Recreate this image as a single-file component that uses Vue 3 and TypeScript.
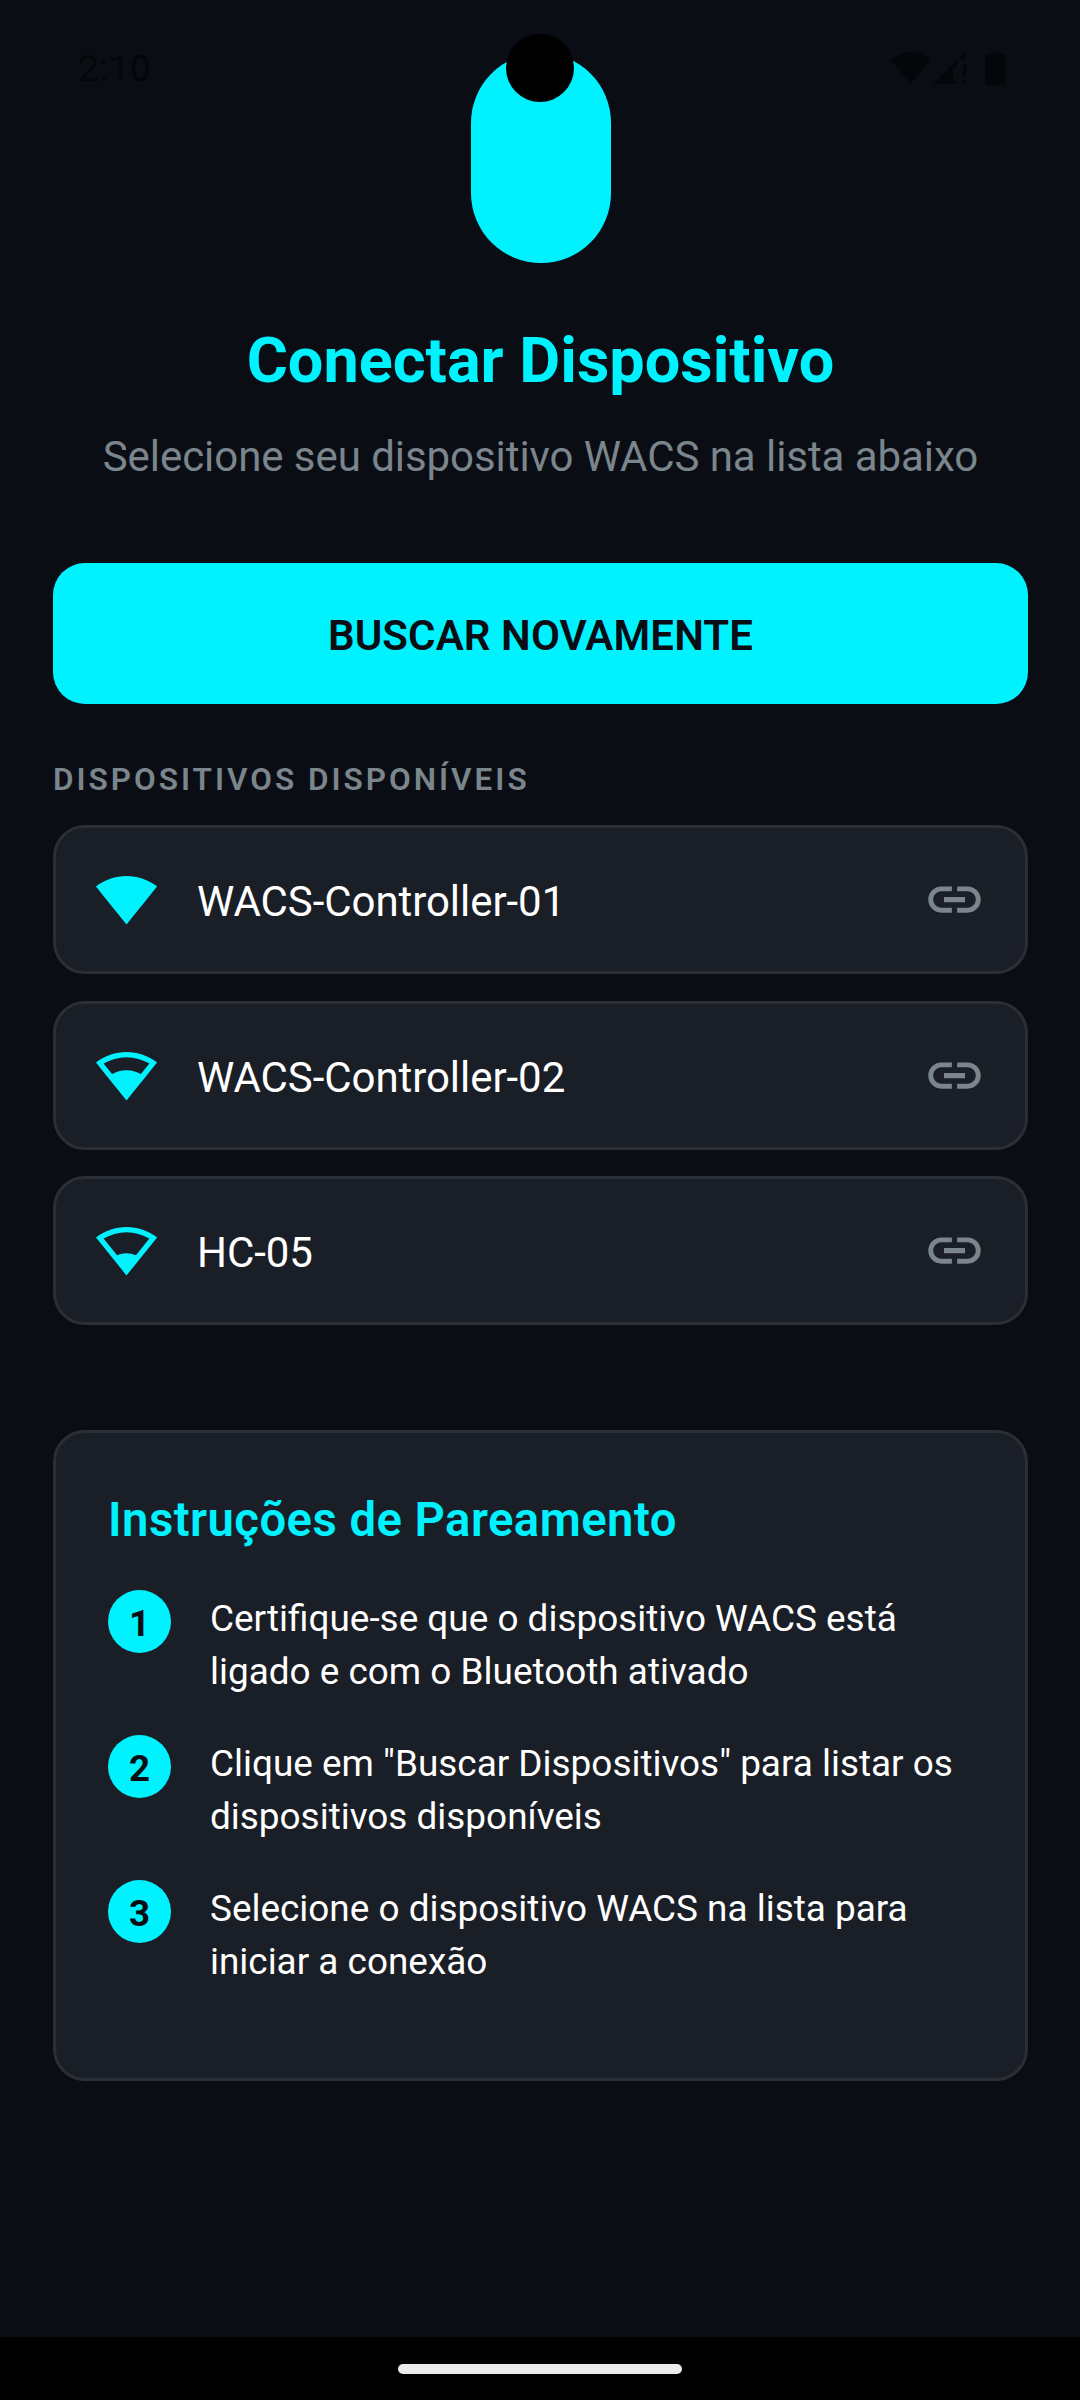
<script setup lang="ts">
interface Device {
  name: string
  signal: string
}

const fan =
  'M12,3C7.79,3 3.7,4.41 0.38,7C4.41,12.06 7.89,16.37 12,21.5C16.08,16.42 20.24,11.24 23.65,7C20.32,4.41 16.22,3 12,3'

const devices: Device[] = [
  { name: 'WACS-Controller-01', signal: fan + 'Z' },
  {
    name: 'WACS-Controller-02',
    signal:
      fan +
      'M12,5C15.07,5 18.09,5.86 20.71,7.45L17.5,11.43C16.26,10.74 14.37,10 12,10C9.62,10 7.74,10.75 6.5,11.43L3.27,7.44C5.91,5.85 8.93,5 12,5Z',
  },
  {
    name: 'HC-05',
    signal:
      fan +
      'M12,5C15.07,5 18.09,5.86 20.71,7.45L15.61,13.81C14.5,13.28 13.25,13 12,13C10.75,13 9.5,13.28 8.39,13.8L3.27,7.44C5.91,5.85 8.93,5 12,5Z',
  },
]

const steps: string[][] = [
  ['Certifique-se que o dispositivo WACS está', 'ligado e com o Bluetooth ativado'],
  ['Clique em "Buscar Dispositivos" para listar os', 'dispositivos disponíveis'],
  ['Selecione o dispositivo WACS na lista para', 'iniciar a conexão'],
]
</script>

<template>
  <div class="screen">
    <div class="status">
      <span class="clock">2:10</span>
      <svg class="status-icons" width="116" height="36" viewBox="0 0 116 36" fill="#050609">
        <path d="M0,9.500C11,-2 28,-2 39,9.500L19.500,32.500Z" />
        <path d="M75,0V8H67L75,0ZM42,33L66,9V14L62,18V30H66V33Z" />
        <path d="M72,13H75V26H72ZM72,29.500H75V33H72Z" />
        <path d="M100,0H108V3H112Q114,3 114,5V32Q114,34 112,34H96Q94,34 94,32V5Q94,3 96,3H100Z" />
      </svg>
    </div>
    <div class="camera"></div>

    <main class="content">
      <div class="logo"></div>
      <h1 class="title">Conectar Dispositivo</h1>
      <p class="subtitle">Selecione seu dispositivo WACS na lista abaixo</p>
      <button class="search">BUSCAR NOVAMENTE</button>
      <h2 class="label">DISPOSITIVOS DISPONÍVEIS</h2>

      <ul class="devices">
        <li v-for="device in devices" :key="device.name" class="device">
          <svg class="signal" viewBox="0 0 24 24"><path fill-rule="evenodd" :d="device.signal" /></svg>
          <span class="name">{{ device.name }}</span>
          <svg class="link" viewBox="0 0 24 24">
            <path
              d="M3.9,12C3.9,10.29 5.29,8.9 7,8.9H11V7H7A5,5 0 0,0 2,12A5,5 0 0,0 7,17H11V15.1H7C5.29,15.1 3.9,13.71 3.9,12M8,13H16V11H8V13M17,7H13V8.9H17C18.71,8.9 20.1,10.29 20.1,12C20.1,13.71 18.71,15.1 17,15.1H13V17H17A5,5 0 0,0 22,12A5,5 0 0,0 17,7Z"
            />
          </svg>
        </li>
      </ul>

      <section class="guide">
        <h3 class="guide-title">Instruções de Pareamento</h3>
        <div v-for="(lines, i) in steps" :key="i" class="step">
          <span class="badge">{{ i + 1 }}</span>
          <p class="step-text">
            <span v-for="line in lines" :key="line" class="line">{{ line }}</span>
          </p>
        </div>
      </section>
    </main>

    <footer class="nav"><div class="handle"></div></footer>
  </div>
</template>

<style>
body {
  margin: 0;
  background: #0a0d14;
}
</style>

<style scoped>
* {
  box-sizing: border-box;
}
.screen {
  position: relative;
  display: flex;
  flex-direction: column;
  width: 1080px;
  height: 2400px;
  overflow: hidden;
  background: #0a0d14;
  font-family: Roboto, sans-serif;
}
.status {
  position: absolute;
  inset: 0 0 auto 0;
  display: flex;
  justify-content: space-between;
  align-items: flex-start;
  padding: 51px 73px 0 78px;
}
.clock {
  margin-top: -4px;
  font-size: 37px;
  line-height: 44px;
  letter-spacing: 0.5px;
  color: #050609;
}
.camera {
  position: absolute;
  z-index: 2;
  top: 34px;
  left: 506px;
  width: 68px;
  height: 68px;
  border-radius: 50%;
  background: #000;
}
.content {
  flex: 1;
  display: flex;
  flex-direction: column;
  padding: 53px 52px 0 53px;
}
.logo {
  align-self: center;
  flex: none;
  width: 140px;
  height: 210px;
  border-radius: 70px;
  background: #00f2ff;
}
.title {
  margin: 61px 0 0;
  font-size: 63px;
  line-height: 74px;
  font-weight: 700;
  text-align: center;
  color: #00f2ff;
}
.subtitle {
  margin: 34px 0 0;
  font-size: 42px;
  line-height: 50px;
  letter-spacing: -0.06px;
  text-align: center;
  white-space: nowrap;
  color: #7b858c;
}
.search {
  height: 141px;
  margin: 81px 0 0;
  padding: 5px 0 0;
  border: 0;
  border-radius: 32px;
  background: #00f2ff;
  font: 600 42px/50px Roboto, sans-serif;
  letter-spacing: 0.1px;
  color: #0a0d14;
}
.label {
  margin: 57px 0 0;
  font-size: 31.5px;
  line-height: 37px;
  font-weight: 600;
  letter-spacing: 3px;
  color: #7b858c;
}
.devices {
  display: flex;
  flex-direction: column;
  gap: 26.5px;
  margin: 27px 0 0;
  padding: 0;
  list-style: none;
}
.device {
  display: flex;
  align-items: center;
  gap: 39.4px;
  height: 149px;
  padding: 0 39.4px;
  border: 3px solid #2a2e36;
  border-radius: 32px;
  background: #1a1e26;
}
.signal,
.link {
  flex: none;
  width: 63px;
  height: 63px;
  fill: #00f2ff;
}
.link {
  fill: #7b858c;
}
.name {
  flex: 1;
  margin-left: -0.7px;
  padding-top: 5px;
  font-size: 42px;
  line-height: 50px;
  letter-spacing: -0.06px;
  color: #fff;
}
.guide {
  height: 651px;
  margin-top: 105px;
  padding: 58px 52px 0;
  border: 3px solid #2a2e36;
  border-radius: 32px;
  background: #1a1e26;
}
.guide-title {
  margin: 0 0 41px;
  font-size: 47.25px;
  line-height: 58px;
  font-weight: 600;
  letter-spacing: 0.46px;
  color: #00f2ff;
}
.step {
  display: flex;
  height: 145px;
  gap: 39px;
}
.badge {
  flex: none;
  width: 63px;
  height: 63px;
  padding-top: 2px;
  border-radius: 50%;
  background: #00f2ff;
  font-size: 36.75px;
  line-height: 63px;
  font-weight: 700;
  text-align: center;
  color: #0a0d14;
}
.step-text {
  margin: 2px 0 0;
  font-size: 36.92px;
  line-height: 53px;
  color: #fff;
}
.line {
  display: block;
  white-space: nowrap;
}
.nav {
  display: flex;
  justify-content: center;
  height: 63px;
  padding-top: 27px;
  background: #000;
}
.handle {
  width: 284px;
  height: 10px;
  border-radius: 5px;
  background: #ebebeb;
}
</style>
